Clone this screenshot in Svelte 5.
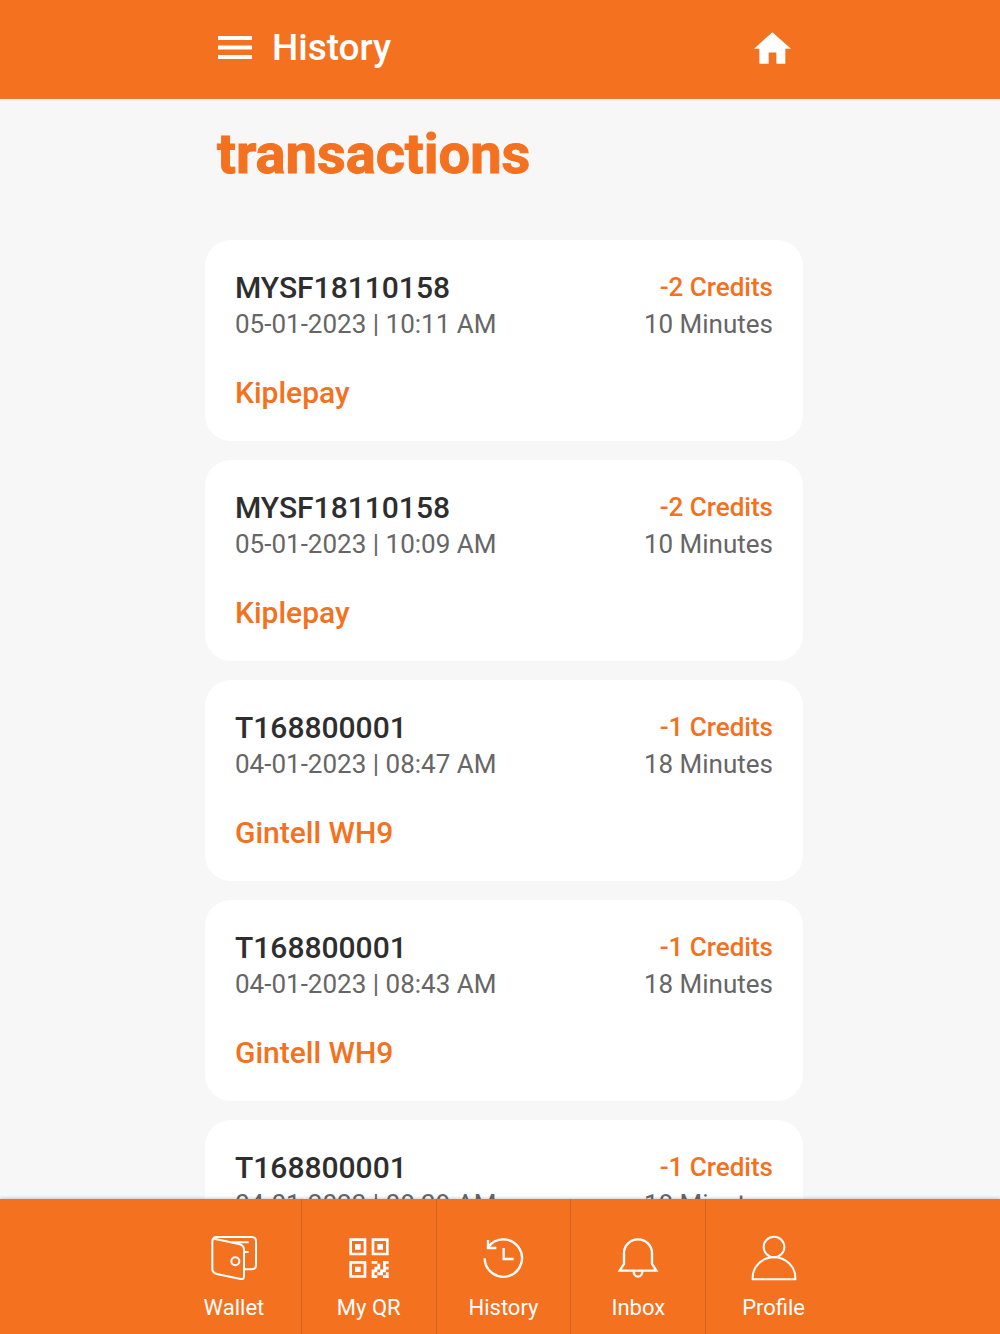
<script>
  const transactions = [
    { id: "MYSF18110158", date: "05-01-2023 | 10:11 AM", credits: -2, minutes: 10, name: "Kiplepay" },
    { id: "MYSF18110158", date: "05-01-2023 | 10:09 AM", credits: -2, minutes: 10, name: "Kiplepay" },
    { id: "T168800001", date: "04-01-2023 | 08:47 AM", credits: -1, minutes: 18, name: "Gintell WH9" },
    { id: "T168800001", date: "04-01-2023 | 08:43 AM", credits: -1, minutes: 18, name: "Gintell WH9" },
    { id: "T168800001", date: "04-01-2023 | 08:39 AM", credits: -1, minutes: 18, name: "Gintell WH9" },
  ];

  const tabs = [
    { icon: "wallet", label: "Wallet" },
    { icon: "qr", label: "My QR" },
    { icon: "history", label: "History" },
    { icon: "inbox", label: "Inbox" },
    { icon: "profile", label: "Profile" },
  ];

  let active = $state("history");
</script>

<div class="app">
  <header class="topbar">
    <div class="column topbar-inner">
      <button type="button" class="icon-btn" aria-label="Menu">
        <svg width="34" height="24" viewBox="0 0 34 24" fill="#fff">
          <rect y="0" width="34" height="4" />
          <rect y="9.5" width="34" height="4" />
          <rect y="19" width="34" height="4" />
        </svg>
      </button>
      <h1>History</h1>
      <a class="home" href="#home" aria-label="Home">
        <svg width="37" height="32" viewBox="0 0 111 95" fill="#fff">
          <path d="M55 0 111 50H94V95H67V61H44V95H16V50H0Z" />
        </svg>
      </a>
    </div>
  </header>

  <main>
    <div class="column content">
      <h2>transactions</h2>
      <ul>
        {#each transactions as t}
          <li class="card">
            <div class="row">
              <span class="id">{t.id}</span>
              <span class="credits">{t.credits} Credits</span>
            </div>
            <div class="row meta">
              <span>{t.date}</span>
              <span>{t.minutes} Minutes</span>
            </div>
            <p class="name">{t.name}</p>
          </li>
        {/each}
      </ul>
    </div>
  </main>

  <nav class="tabbar">
    <div class="column tabs">
      {#each tabs as tab}
        <a
          class="tab"
          href={"#" + tab.icon}
          aria-current={active === tab.icon ? "page" : undefined}
          onclick={() => (active = tab.icon)}
        >
          <svg width="46" height="46" viewBox="0 0 138 138" fill="none" stroke="#fff" stroke-width="6">
            {#if tab.icon === "wallet"}
              <path d="M5 16Q6 6 17 6H122Q135 6 135 19V90Q135 103 122 103H101" />
              <path d="M13 12 84 27Q99 31 99 44V124Q99 134 89 132L17 117Q4 113 4 101V19Q4 10 13 12Z" />
              <path d="M62 22H113M101 51H113" />
              <circle cx="73" cy="79" r="12" />
            {:else if tab.icon === "qr"}
              <path d="M14 14H57V57H14ZM81 14H124V57H81ZM14 82H57V124H14Z" stroke-width="8" />
              <path d="M27 27H44V44H27ZM94 27H111V44H94ZM27 95H44V111H27Z" fill="#fff" stroke="none" />
              <path
                transform="translate(77 78) scale(8.5)"
                d="M0 0H2V1H0ZM4 0H6V1H5V2H4ZM2 1H3V3H1V2H2ZM4 2H6V3H5V4H3V3H4ZM0 3H2V4H1V5H2V6H0ZM2 4H4V5H2ZM5 4H6V6H4V5H5Z"
                fill="#fff"
                stroke="none"
              />
            {:else if tab.icon === "history"}
              <path d="M14 70A56 56 0 1 0 25 36" stroke-width="7" />
              <path d="M24 15V39H49M71 39V72H101" stroke-width="7" />
            {:else if tab.icon === "inbox"}
              <path d="M14 107 27 87V54A42 41 0 0 1 111 54V87L124 107Z" stroke-width="7" />
              <path d="M56 109A13 16 0 0 0 82 109" stroke-width="7" />
            {:else}
              <circle cx="69" cy="36" r="31" />
              <path d="M5 133V128A64 61 0 0 1 133 128V133Z" />
            {/if}
          </svg>
          <span>{tab.label}</span>
        </a>
      {/each}
    </div>
  </nav>
</div>

<style>
  :global(body) {
    margin: 0;
    background: #f7f7f7;
  }
  .app {
    display: flex;
    flex-direction: column;
    height: 100vh;
    color: #2e2e2e;
    font-family: Roboto, "Liberation Sans", sans-serif;
  }
  .column {
    box-sizing: border-box;
    width: 100%;
    max-width: 674px;
    margin: 0 auto;
  }
  .topbar,
  main,
  .tabbar {
    padding-left: 8px;
  }
  .topbar {
    flex: none;
    background: #f47120;
    color: #fff;
  }
  .topbar-inner {
    display: flex;
    align-items: center;
    padding: 26px 50px 29px 51px;
  }
  .icon-btn {
    display: flex;
    margin: 0;
    padding: 0;
    border: 0;
    background: none;
    cursor: pointer;
  }
  h1 {
    flex: 1;
    margin: 0 0 0 20px;
    font-size: 37px;
    font-weight: 500;
    line-height: 44px;
  }
  .home {
    display: flex;
  }
  main {
    flex: 1;
    min-height: 0;
    overflow-y: auto;
    scrollbar-width: none;
  }
  .content {
    padding: 20px 38px;
  }
  h2 {
    margin: 0 0 51px 12px;
    color: #f47120;
    font-size: 56px;
    font-weight: 700;
    line-height: 70px;
    -webkit-text-stroke: 1px #f47120;
  }
  ul {
    display: flex;
    flex-direction: column;
    gap: 19px;
    margin: 0;
    padding: 0;
    list-style: none;
  }
  .card {
    padding: 30px;
    border-radius: 26px;
    background: #fff;
  }
  .row {
    display: flex;
    justify-content: space-between;
    font-size: 26px;
    line-height: 36px;
  }
  .id,
  .name {
    font-size: 30px;
    font-weight: 500;
    line-height: 36px;
  }
  .credits {
    color: #f47120;
    font-weight: 500;
    line-height: 34px;
  }
  .meta {
    color: #666;
    line-height: 37px;
  }
  .name {
    margin: 32px 0 0;
    color: #f47120;
  }
  .tabbar {
    position: relative;
    flex: none;
    background: #f47120;
    box-shadow: 0 -1px 3px rgba(0, 0, 0, 0.2);
  }
  .tabs {
    display: grid;
    grid-template-columns: repeat(5, 1fr);
  }
  .tab {
    display: flex;
    flex-direction: column;
    align-items: center;
    gap: 13px;
    padding: 36px 0 12px;
    border-right: 1px solid #d5631e;
    color: #fff;
    font-size: 22px;
    line-height: 28px;
    text-decoration: none;
  }
  .tab:last-child {
    border-right: 0;
  }
</style>
